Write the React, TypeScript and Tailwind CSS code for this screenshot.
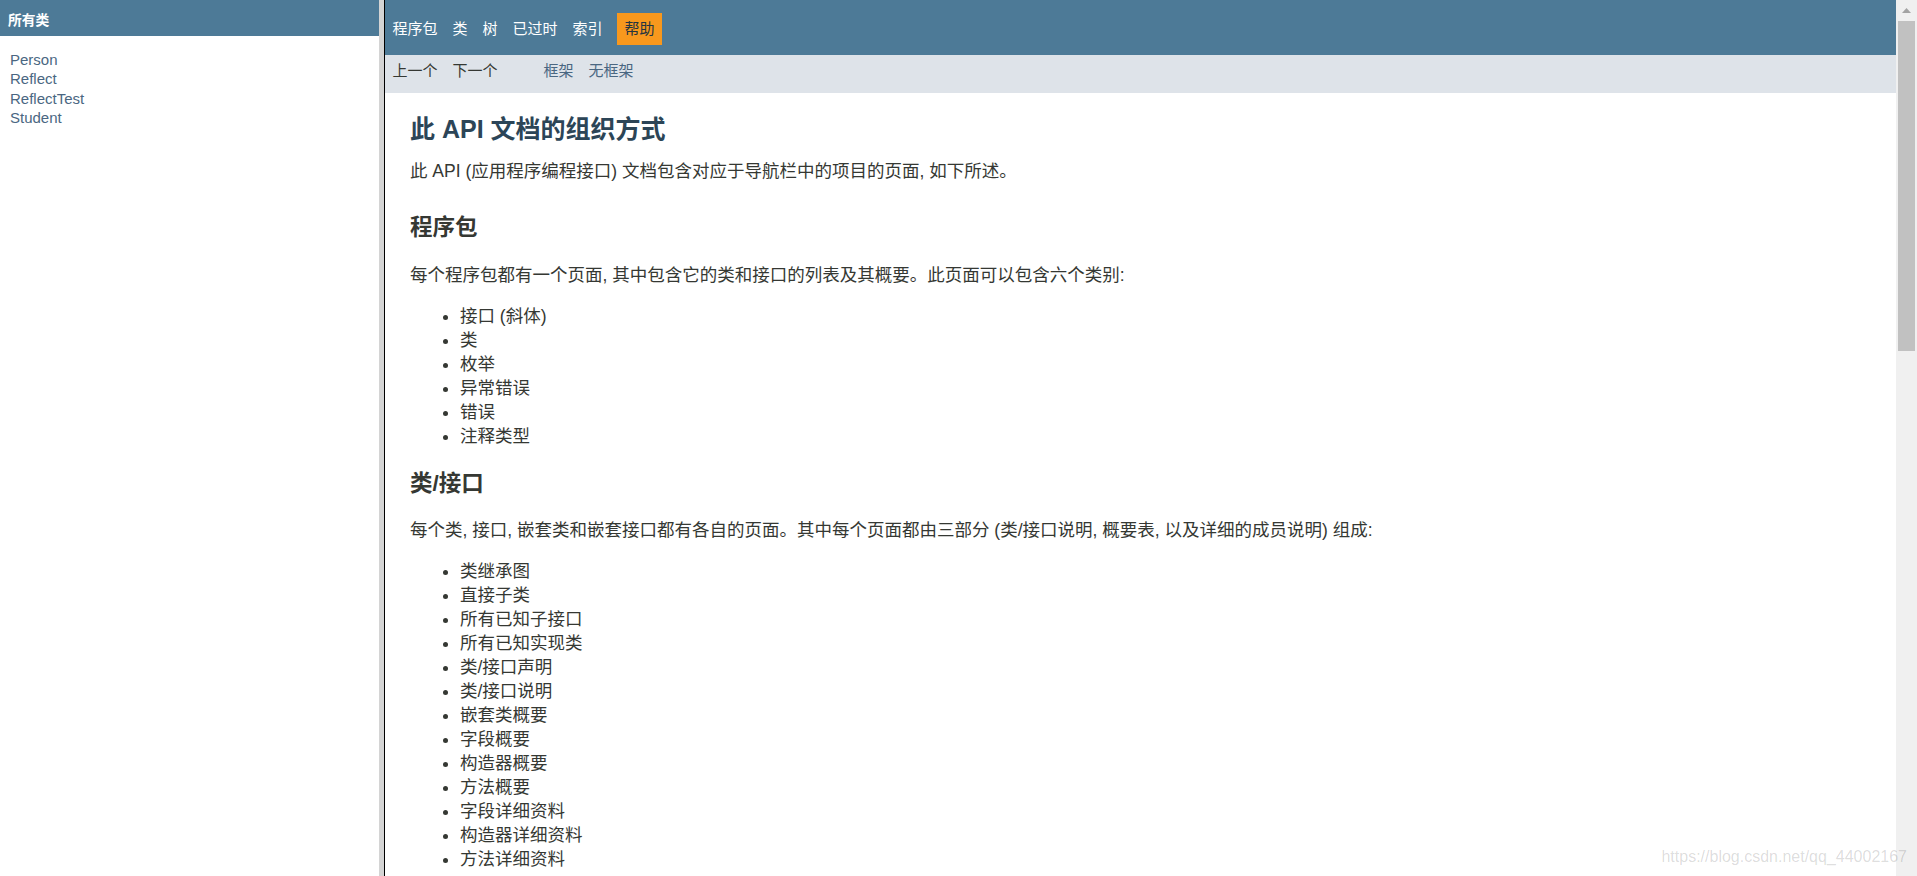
import React from 'react';

const CLASSES = ['Person', 'Reflect', 'ReflectTest', 'Student'];
const TOP_NAV = ['程序包', '类', '树', '已过时', '索引'];
const PACKAGE_KINDS = ['接口 (斜体)', '类', '枚举', '异常错误', '错误', '注释类型'];
const CLASS_PARTS = [
  '类继承图',
  '直接子类',
  '所有已知子接口',
  '所有已知实现类',
  '类/接口声明',
  '类/接口说明',
  '嵌套类概要',
  '字段概要',
  '构造器概要',
  '方法概要',
  '字段详细资料',
  '构造器详细资料',
  '方法详细资料',
];

const App: React.FC = () => {
  return (
    <div className="relative flex h-[876px] w-[1917px] overflow-hidden bg-white font-['Liberation_Sans','Noto_Sans_CJK_SC',sans-serif] text-[#353833]">
      {/* left frame: all classes */}
      <aside className="w-[379px] shrink-0">
        <div className="h-[36px] bg-[#4d7a97] pl-[8px] pt-[13px] text-[13.75px] font-bold leading-[16px] text-white">所有类</div>
        <ul className="mt-[14px] pl-[10px] text-[15px] leading-[19.4px] text-[#4a6782]">
          {CLASSES.map((name) => (
            <li key={name}>{name}</li>
          ))}
        </ul>
      </aside>

      {/* frame border */}
      <div className="w-[5px] shrink-0 bg-[#d4d4d4]" />
      <div className="w-px shrink-0 bg-black" />

      {/* right frame */}
      <main className="flex min-w-0 flex-1">
        <div className="min-w-0 flex-1">
          <div className="h-[55px] bg-[#4d7a97] pt-[12.5px]">
            <ul className="flex text-[15px] leading-[19.5px] text-white">
              {TOP_NAV.map((item) => (
                <li key={item} className="px-[7.5px] py-[6.25px]">{item}</li>
              ))}
              <li className="ml-[7px] bg-[#f8981d] px-[7.5px] py-[6.25px] text-[#253441]">帮助</li>
            </ul>
          </div>

          <div className="flex h-[38px] bg-[#dee3e9] text-[15px] leading-[19.5px]">
            <ul className="flex">
              <li className="px-[7.5px] py-[6.25px]">上一个</li>
              <li className="px-[7.5px] py-[6.25px]">下一个</li>
            </ul>
            <ul className="ml-[31px] flex text-[#4a6782]">
              <li className="px-[7.5px] py-[6.25px]">框架</li>
              <li className="px-[7.5px] py-[6.25px]">无框架</li>
            </ul>
          </div>

          <div className="px-[25px] pt-[21px] text-[17.5px] leading-[24px]">
            <h1 className="text-[25px] font-bold leading-[30px] text-[#2c4557]">此 API 文档的组织方式</h1>
            <p className="mt-[15px]">此 API (应用程序编程接口) 文档包含对应于导航栏中的项目的页面, 如下所述。</p>

            <h2 className="mt-[31px] text-[22.5px] font-bold leading-[28px]">程序包</h2>
            <p className="mt-[21px]">每个程序包都有一个页面, 其中包含它的类和接口的列表及其概要。此页面可以包含六个类别:</p>
            <ul className="mt-[17px] list-disc pl-[50px]">
              {PACKAGE_KINDS.map((item) => (
                <li key={item}>{item}</li>
              ))}
            </ul>

            <h2 className="mt-[22px] text-[22.5px] font-bold leading-[28px]">类/接口</h2>
            <p className="mt-[20px]">每个类, 接口, 嵌套类和嵌套接口都有各自的页面。其中每个页面都由三部分 (类/接口说明, 概要表, 以及详细的成员说明) 组成:</p>
            <ul className="mt-[17px] list-disc pl-[50px]">
              {CLASS_PARTS.map((item) => (
                <li key={item}>{item}</li>
              ))}
            </ul>
          </div>
        </div>

        {/* scrollbar */}
        <div className="flex w-[21px] shrink-0 flex-col items-center bg-[#f0f0f0]">
          <div className="flex h-[21px] items-center justify-center">
            <svg width="9" height="5" viewBox="0 0 9 5">
              <path d="M4.5 0 L9 5 L0 5 Z" fill="#a3a3a3" />
            </svg>
          </div>
          <div className="h-[330px] w-[17px] bg-[#c1c1c1]" />
        </div>
      </main>

      {/* watermark */}
      <div className="pointer-events-none absolute bottom-[10px] right-[10px] text-[16px] leading-[18px] text-black/[0.15]">
        https://blog.csdn.net/qq_44002167
      </div>
    </div>
  );
};

export default App;
